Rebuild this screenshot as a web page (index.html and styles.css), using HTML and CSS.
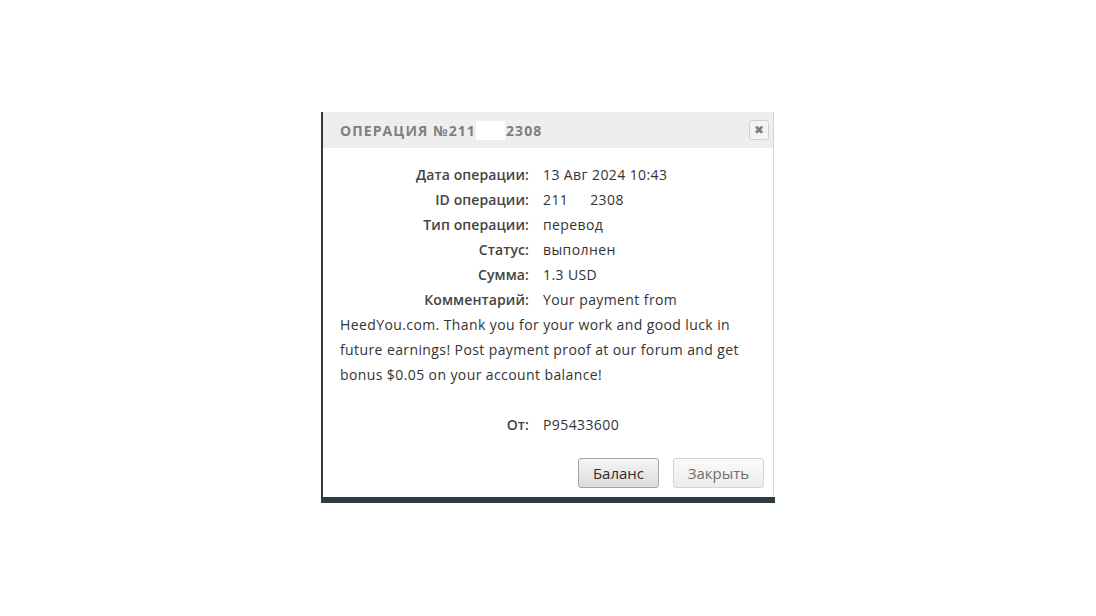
FILE: index.html
```html
<!DOCTYPE html>
<html lang="ru">
<head>
<meta charset="utf-8">
<title>Операция</title>
<link rel="stylesheet" href="styles.css">
</head>
<body>
<div class="stage">
  <div class="backdrop">
    <div class="dialog">
      <div class="dialog-head">
        <span class="title">Операция №211<span class="redact"></span>2308</span>
        <button class="close" type="button" aria-label="Закрыть">✖</button>
      </div>
      <div class="dialog-body">
        <div class="info">
          <div class="row"><span class="label">Дата операции:</span><span class="value">13 Авг 2024 10:43</span></div>
          <div class="row"><span class="label">ID операции:</span><span class="value">211<span class="gap"></span>2308</span></div>
          <div class="row"><span class="label">Тип операции:</span><span class="value">перевод</span></div>
          <div class="row"><span class="label">Статус:</span><span class="value">выполнен</span></div>
          <div class="row"><span class="label">Сумма:</span><span class="value">1.3 USD</span></div>
          <div class="row"><span class="label">Комментарий:</span>Your payment from HeedYou.com. Thank you for your work and good luck in future earnings! Post payment proof at our forum and get bonus $0.05 on your account balance!</div>
          <div class="row spacer"></div>
          <div class="row"><span class="label">От:</span><span class="value">P95433600</span></div>
        </div>
        <div class="actions">
          <button class="btn btn-primary" type="button">Баланс</button>
          <button class="btn btn-muted" type="button">Закрыть</button>
        </div>
      </div>
    </div>
  </div>
</div>
</body>
</html>
```
FILE: styles.css
```css
html, body {
  margin: 0;
  padding: 0;
  background: #ffffff;
}

.stage {
  padding: 112px 0 0 321px;
}

.backdrop {
  width: 452px;
  border-left: 2px solid #2e3b41;
  border-bottom: 6px solid #2e3b41;
  background: #ffffff;
}

.dialog {
  height: 385px;
  background: #ffffff;
  border-right: 1px solid #d4d4d4;
  margin-right: 1px;
  border-radius: 0 0 4px 4px;
  display: flex;
  flex-direction: column;
}

.dialog-head {
  height: 36px;
  background: #eeeeee;
  display: flex;
  align-items: center;
  justify-content: space-between;
  padding: 0 4px 0 17px;
}

.title {
  font-family: "Open Sans", sans-serif;
  font-weight: 700;
  font-size: 14px;
  letter-spacing: 1.1px;
  text-transform: uppercase;
  color: #7f7f7f;
  display: flex;
  align-items: center;
}

.redact {
  display: inline-block;
  width: 29px;
  height: 19px;
  background: #ffffff;
  margin: 0 1px 0 0;
}

.close {
  width: 20px;
  height: 20px;
  padding: 0;
  border: 1px solid #d0d0d0;
  border-radius: 3px;
  background: #f4f4f4;
  color: #7d7d7d;
  font-size: 12px;
  font-weight: 700;
  line-height: 18px;
  font-family: "DejaVu Sans", sans-serif;
  display: flex;
  align-items: center;
  justify-content: center;
}

.dialog-body {
  padding: 14px 9px 9px 17px;
  display: flex;
  flex-direction: column;
  flex: 1;
}

.info {
  font-family: "Open Sans", sans-serif;
  font-size: 14px;
  letter-spacing: 0.4px;
  line-height: 25px;
  color: #333333;
}

.row {
  display: block;
}

.spacer {
  height: 25px;
}

.label {
  display: inline-block;
  width: 189px;
  text-align: right;
  margin-right: 14px;
  font-weight: 600;
  letter-spacing: 0.1px;
  color: #444444;
}

.gap {
  display: inline-block;
  width: 22px;
}

.actions {
  margin-top: auto;
  display: flex;
  justify-content: flex-end;
  gap: 14px;
}

.btn {
  height: 30px;
  font-family: "Open Sans", sans-serif;
  font-size: 15px;
  border-radius: 3px;
  padding: 0 10px;
  cursor: pointer;
}

.btn-primary {
  width: 81px;
  border: 1px solid #a4a4a4;
  background: linear-gradient(#f5f5f5, #dcdcdc);
  color: #2c2c2c;
}

.btn-muted {
  width: 91px;
  border: 1px solid #d4d4d4;
  background: linear-gradient(#fafafa, #ececec);
  color: #6f6f6f;
}
```
